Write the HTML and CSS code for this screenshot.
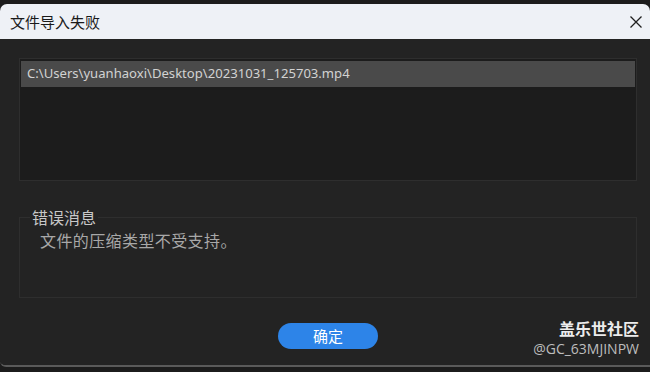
FILE: index.html
```html
<!DOCTYPE html>
<html lang="zh">
<head>
<meta charset="utf-8">
<link rel="stylesheet" href="styles.css">
</head>
<body>
<div class="screen">
  <div class="dialog">
    <div class="titlebar">
      <span class="title">文件导入失败</span>
      <svg class="close" width="12" height="12" viewBox="0 0 12 12"><path d="M0.5 0.5 L11.5 11.5 M11.5 0.5 L0.5 11.5" stroke="#1f1f1f" stroke-width="1.3" fill="none"/></svg>
    </div>
    <div class="body">
      <div class="list">
        <div class="row">C:\Users\yuanhaoxi\Desktop\20231031_125703.mp4</div>
      </div>
      <fieldset class="errors">
        <legend>错误消息</legend>
        <div class="msg">文件的压缩类型不受支持。</div>
      </fieldset>
      <div class="actions">
        <button class="ok">确定</button>
      </div>
      <div class="watermark">
        <div class="wm-name">盖乐世社区</div>
        <div class="wm-id">@GC_63MJINPW</div>
      </div>
    </div>
  </div>
</div>
</body>
</html>
```
FILE: styles.css
```css
html, body {
  margin: 0;
  padding: 0;
  background: #1c1c1c;
  width: 650px;
  height: 372px;
  overflow: hidden;
  font-family: "Noto Sans CJK SC", "Noto Sans", sans-serif;
}
.screen {
  padding-top: 4px;
}
.dialog {
  width: 650px;
  border-radius: 7px 7px 0 6px;
  overflow: hidden;
  border-bottom: 2px solid #5a5a5a;
}
.titlebar {
  height: 35px;
  background: #eef1f6;
  display: flex;
  align-items: center;
  justify-content: space-between;
  padding: 0 8px 0 10px;
  box-sizing: border-box;
}
.title {
  font-size: 15px;
  color: #1a1a1a;
  line-height: 18px;
}
.close {
  display: block;
}
.body {
  position: relative;
  background: #232323;
  height: 326px;
  padding: 19px 13px 0 19px;
  box-sizing: border-box;
}
.list {
  height: 123px;
  background: #1c1c1c;
  border: 1px solid #2e2e2e;
  box-sizing: border-box;
  padding: 2px 1px;
}
.row {
  height: 26px;
  background: #4a4a4a;
  color: #d2d2d2;
  font-family: "Noto Sans", sans-serif;
  font-size: 13.1px;
  line-height: 25px;
  padding-left: 6px;
}
.errors {
  margin: 27px 0 0 0;
  padding: 5px 20px 0 20px;
  border: 1px solid #2e2e2e;
  min-width: 0;
}
.errors legend {
  font-size: 16px;
  line-height: 18px;
  color: #c8c8c8;
  padding: 0 2px;
  margin-left: -10px;
}
.msg {
  font-size: 16px;
  line-height: 18px;
  color: #a8a8a8;
  height: 66px;
  letter-spacing: 0.4px;
}
.actions {
  display: flex;
  justify-content: center;
  margin-top: 25px;
}
.ok {
  width: 100px;
  height: 26px;
  border: none;
  border-radius: 13px;
  background: #2d84e8;
  color: #ffffff;
  font-family: "Noto Sans CJK SC", sans-serif;
  font-size: 15px;
  line-height: 26px;
  padding: 0;
}
.watermark {
  position: absolute;
  right: 11px;
  top: 278px;
  text-align: right;
}
.wm-name {
  font-size: 16px;
  font-weight: bold;
  color: #ececec;
  line-height: 22px;
}
.wm-id {
  font-family: "Open Sans", sans-serif;
  font-size: 14px;
  color: #bdbdbd;
  line-height: 20px;
}
```
